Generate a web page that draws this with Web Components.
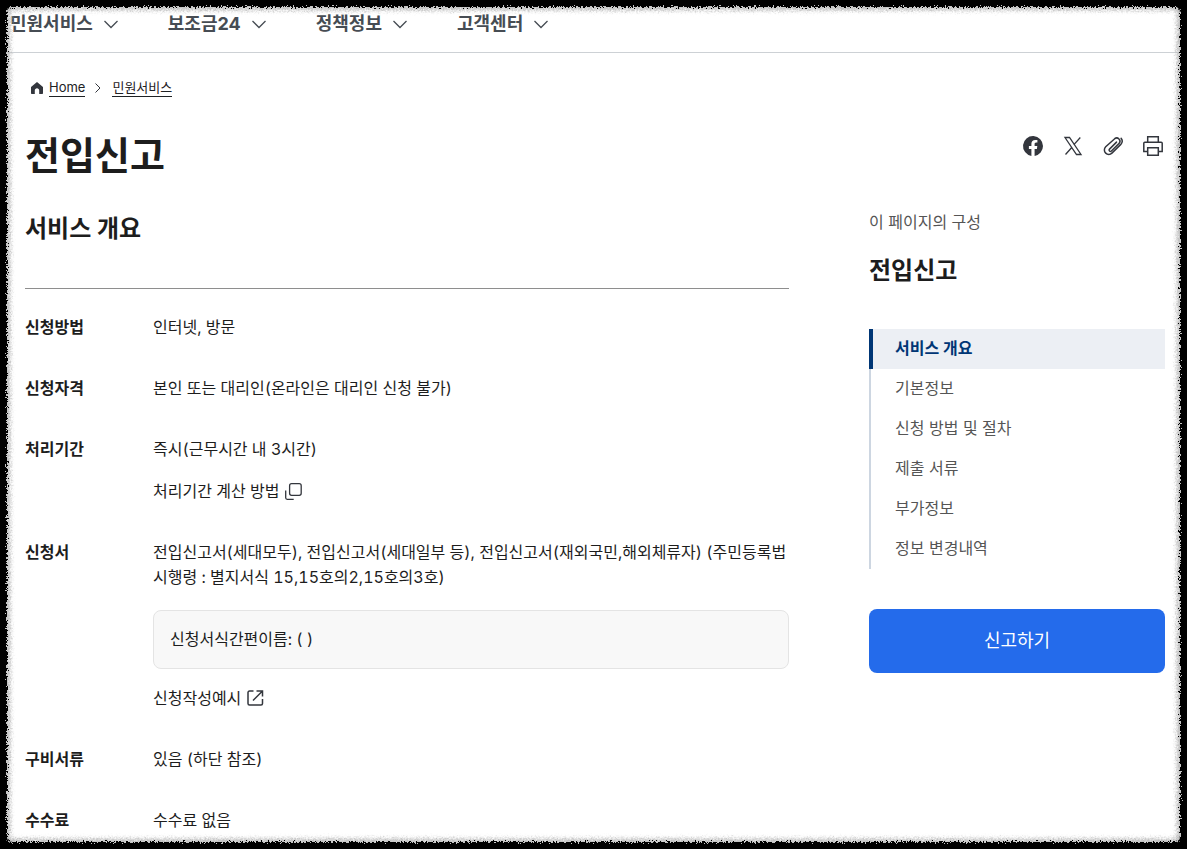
<!DOCTYPE html>
<html lang="ko">
<head>
<meta charset="utf-8">
<meta name="viewport" content="width=device-width, initial-scale=1">
<title>전입신고</title>
<style>
  html {
    background: #fff;
  }

  body {
    margin: 0;
    color: #1d1d1d;
    font-family: Inter, "Noto Sans CJK KR", sans-serif;
    font-size: 16px;
    line-height: 25px;
    height: 100vh;
    overflow: hidden;
  }
</style>
</head>
<body>
<service-page></service-page>

<script>
const icons = {
  down: '<path d="M0.500 4 7 10.500l6.500-6.500" fill="none" stroke="currentColor" stroke-width="1.3"/>',
  right: '<path d="M4.5 2.5 9 7l-4.500 4.500" fill="none" stroke="currentColor" stroke-width="1"/>',
  home: '<path d="M7 1 1 6v6.300c0 .4.3.7.7.7h3.100V9.500c0-1.200 1-2.200 2.200-2.200s2.200 1 2.200 2.200V13h3.100c.4 0 .7-.3.7-.7V6z" fill="currentColor"/>',
  facebook: '<path d="M22 12a10 10 0 1 0-11.600 9.900v-7H7.900V12h2.500V9.800c0-2.500 1.500-3.900 3.800-3.900 1.100 0 2.200.2 2.200.2v2.500h-1.200c-1.200 0-1.600.8-1.600 1.500V12h2.700l-.4 2.900h-2.300v7A10 10 0 0 0 22 12z" fill="currentColor"/>',
  x: '<path d="M4 3.500h4.500L20 20.500h-4.500zM19.300 3.500l-6.600 7.400M11 13.200l-6.500 7.300" fill="none" stroke="currentColor" stroke-width="1.3"/>',
  clip: '<path d="m15.500 8.100-7 7a1.300 1.300 0 0 0 1.900 1.900l7.800-7.800a3.200 3.200 0 0 0-4.500-4.500L4.700 12.800a4.400 4.400 0 0 0 0 6.300 4.400 4.400 0 0 0 6.200 0l8.900-8.700a4.700 4.700 0 0 0 .3-6.100" fill="none" stroke="currentColor" stroke-width="1.500" stroke-linecap="round"/>',
  print: '<g fill="none" stroke="currentColor" stroke-width="1.500"><path d="M6.700 8.300V2.800h10.600v5.500M6.700 17.500H2.800V9.300c0-.6.4-1 1-1h16.400c.6 0 1 .4 1 1v8.200h-3.900"/><path d="M6.700 13.800h10.600v7.400H6.700z"/></g>',
  layer: '<g fill="none" stroke="currentColor" stroke-width="1.300"><rect x="5.600" y="1.700" width="11.600" height="11.600" rx="2"/><path d="M1.700 8.500v7.300c0 .8.700 1.500 1.500 1.500h6.500"/></g>',
  open: '<g fill="none" stroke="currentColor" stroke-width="1.500"><path d="M7.500 2H3.500C2.700 2 2 2.700 2 3.500v11c0 .8.700 1.500 1.500 1.500h11.500c.8 0 1.500-.7 1.500-1.500V10M10.500 2h6v5.500M16.500 2 7 11.500"/></g>'
};

class UiIcon extends HTMLElement {
  connectedCallback() {
    const size = this.getAttribute('size') || 24;
    this.attachShadow({ mode: 'open' });
    this.shadowRoot.innerHTML = `
      <style>
        :host {
          display: block;
          flex: none;
        }

        svg {
          display: block;
        }
      </style>
      <svg width="${size}" height="${size}" viewBox="0 0 ${size} ${size}" aria-hidden="true">${icons[this.getAttribute('name')]}</svg>
    `;
  }
}

class SiteNav extends HTMLElement {
  connectedCallback() {
    const menus = ['민원서비스', '보조금24', '정책정보', '고객센터'];
    this.attachShadow({ mode: 'open' });
    this.shadowRoot.innerHTML = `
      <style>
        :host {
          display: block;
          border-bottom: 1px solid #cdd1d5;
        }

        nav {
          display: flex;
          gap: 50px;
          padding: 11px 10px 16px;
        }

        button {
          display: flex;
          align-items: center;
          gap: 11px;
          padding: 0;
          border: 0;
          background: none;
          color: #464c53;
          font: inherit;
          font-size: 18px;
          font-weight: 700;
          white-space: nowrap;
          cursor: pointer;
        }
      </style>
      <nav>
        ${menus.map(m => `<button type="button" aria-haspopup="true">${m}<ui-icon name="down" size="14"></ui-icon></button>`).join('')}
      </nav>
    `;
  }
}

class BreadCrumb extends HTMLElement {
  connectedCallback() {
    this.attachShadow({ mode: 'open' });
    this.shadowRoot.innerHTML = `
      <style>
        :host {
          display: block;
          font-size: 13px;
          line-height: 18px;
        }

        nav {
          display: flex;
          align-items: center;
          gap: 5px;
          padding-left: 5px;
        }

        ui-icon {
          color: #33363d;
        }

        .arrow {
          margin: 0 2px 0 1px;
        }

        a {
          color: #1e2124;
          text-decoration: none;
          border-bottom: 1px solid #1e2124;
        }
      </style>
      <nav aria-label="breadcrumb">
        <ui-icon name="home" size="14"></ui-icon>
        <a href="#">Home</a>
        <ui-icon class="arrow" name="right" size="14"></ui-icon>
        <a href="#">민원서비스</a>
      </nav>
    `;
  }
}

class ShareTools extends HTMLElement {
  connectedCallback() {
    this.attachShadow({ mode: 'open' });
    this.shadowRoot.innerHTML = `
      <style>
        :host {
          display: flex;
          gap: 16px;
        }

        button {
          padding: 0;
          border: 0;
          background: none;
          color: #33363d;
          cursor: pointer;
        }
      </style>
      <button type="button" aria-label="페이스북"><ui-icon name="facebook"></ui-icon></button>
      <button type="button" aria-label="X"><ui-icon name="x"></ui-icon></button>
      <button type="button" aria-label="링크 복사"><ui-icon name="clip"></ui-icon></button>
      <button type="button" aria-label="인쇄"><ui-icon name="print"></ui-icon></button>
    `;
  }
}

class InfoRow extends HTMLElement {
  connectedCallback() {
    this.attachShadow({ mode: 'open' });
    this.shadowRoot.innerHTML = `
      <style>
        :host {
          display: grid;
          grid-template-columns: 128px 1fr;
          font-variant-numeric: tabular-nums;
        }

        h3 {
          margin: 0;
          font-size: 16px;
          font-weight: 700;
        }

        .content {
          display: flex;
          flex-direction: column;
          align-items: flex-start;
          gap: 16px;
        }
      </style>
      <h3>${this.getAttribute('label')}</h3>
      <div class="content"><slot></slot></div>
    `;
  }
}

class IconLink extends HTMLElement {
  connectedCallback() {
    this.attachShadow({ mode: 'open' });
    this.shadowRoot.innerHTML = `
      <style>
        :host {
          display: block;
        }

        a {
          display: flex;
          align-items: center;
          gap: 5px;
          min-height: 26px;
          color: inherit;
          text-decoration: none;
        }

        ui-icon {
          color: #33363d;
        }
      </style>
      <a href="#"><slot></slot><ui-icon name="${this.getAttribute('icon')}" size="18"></ui-icon></a>
    `;
  }
}

class NoteBox extends HTMLElement {
  connectedCallback() {
    this.attachShadow({ mode: 'open' });
    this.shadowRoot.innerHTML = `
      <style>
        :host {
          display: block;
          box-sizing: border-box;
          width: 100%;
          margin-top: 4px;
          padding: 16px;
          border: 1px solid #e4e4e4;
          border-radius: 8px;
          background: #f8f8f8;
        }
      </style>
      <slot></slot>
    `;
  }
}

class PageIndex extends HTMLElement {
  connectedCallback() {
    const items = ['서비스 개요', '기본정보', '신청 방법 및 절차', '제출 서류', '부가정보', '정보 변경내역'];
    this.attachShadow({ mode: 'open' });
    this.shadowRoot.innerHTML = `
      <style>
        :host {
          display: block;
        }

        p {
          margin: 0;
          color: #555;
        }

        h2 {
          margin: 19px 0 41px;
          font-size: 24px;
          line-height: 34px;
        }

        ul {
          margin: 0 0 40px;
          padding: 0;
          list-style: none;
        }

        a {
          display: block;
          padding: 7px 0 8px 24px;
          border-left: 2px solid #cdd6e1;
          color: #555;
          text-decoration: none;
        }

        a[aria-current] {
          padding-left: 22px;
          border-left: 4px solid #003675;
          background: #eceff4;
          color: #003675;
          font-weight: 700;
        }

        button {
          width: 100%;
          height: 64px;
          padding: 0 0 2px;
          border: 0;
          border-radius: 8px;
          background: #246beb;
          color: #fff;
          font: inherit;
          font-size: 18px;
          cursor: pointer;
        }
      </style>
      <p>이 페이지의 구성</p>
      <h2>전입신고</h2>
      <ul>
        ${items.map((t, i) => `<li><a href="#"${i === 0 ? ' aria-current="true"' : ''}>${t}</a></li>`).join('')}
      </ul>
      <button type="button">신고하기</button>
    `;
  }
}

/* Torn black edge that lies over the whole window */
class RoughFrame extends HTMLElement {
  connectedCallback() {
    this.attachShadow({ mode: 'open' });
    this.shadowRoot.innerHTML = `
      <style>
        :host {
          position: fixed;
          inset: 0;
          overflow: hidden;
          pointer-events: none;
        }

        div {
          position: absolute;
          inset: -20px;
          border: 27px solid #000;
          border-radius: 32px;
          outline: 20px solid #000;
          outline-offset: -20px;
          box-shadow: inset 0 0 4px 3px #bbb;
          filter: url(#rough);
        }

        svg {
          position: absolute;
        }
      </style>
      <svg width="0" height="0" aria-hidden="true">
        <filter id="rough" x="0" y="0" width="100%" height="100%" color-interpolation-filters="sRGB">
          <feTurbulence type="fractalNoise" baseFrequency="0.6" numOctaves="3" seed="4" result="noise"/>
          <feDisplacementMap in="SourceGraphic" in2="noise" scale="7" xChannelSelector="R" yChannelSelector="G"/>
        </filter>
      </svg>
      <div></div>
    `;
  }
}

class ServicePage extends HTMLElement {
  connectedCallback() {
    this.attachShadow({ mode: 'open' });
    this.shadowRoot.innerHTML = `
      <style>
        :host {
          display: block;
        }

        main {
          padding: 25px 22px 40px 25px;
        }

        .title {
          display: flex;
          justify-content: space-between;
          align-items: flex-start;
          margin-top: 28px;
        }

        h1 {
          margin: 0;
          font-size: 38px;
          line-height: 60px;
        }

        share-tools {
          margin-top: 9px;
        }

        .columns {
          display: grid;
          grid-template-columns: 1fr 296px;
          gap: 80px;
          margin-top: 25px;
        }

        h2 {
          margin: 0;
          padding: 2px 0 42px;
          border-bottom: 1px solid #8e8e8e;
          font-size: 24px;
          line-height: 34px;
        }

        .rows {
          display: flex;
          flex-direction: column;
          gap: 36px;
          padding-top: 26px;
        }
      </style>
      <site-nav></site-nav>
      <main>
        <bread-crumb></bread-crumb>
        <div class="title">
          <h1>전입신고</h1>
          <share-tools></share-tools>
        </div>
        <div class="columns">
          <section>
            <h2>서비스 개요</h2>
            <div class="rows">
              <info-row label="신청방법"><span>인터넷, 방문</span></info-row>
              <info-row label="신청자격"><span>본인 또는 대리인(온라인은 대리인 신청 불가)</span></info-row>
              <info-row label="처리기간">
                <span>즉시(근무시간 내 3시간)</span>
                <icon-link icon="layer">처리기간 계산 방법</icon-link>
              </info-row>
              <info-row label="신청서">
                <span>전입신고서(세대모두), 전입신고서(세대일부 등), 전입신고서(재외국민,해외체류자) (주민등록법<br>시행령 : 별지서식 15,15호의2,15호의3호)</span>
                <note-box>신청서식간편이름: ( )</note-box>
                <icon-link icon="open">신청작성예시</icon-link>
              </info-row>
              <info-row label="구비서류"><span>있음 (하단 참조)</span></info-row>
              <info-row label="수수료"><span>수수료 없음</span></info-row>
            </div>
          </section>
          <page-index></page-index>
        </div>
      </main>
      <rough-frame></rough-frame>
    `;
  }
}

customElements.define('ui-icon', UiIcon);
customElements.define('site-nav', SiteNav);
customElements.define('bread-crumb', BreadCrumb);
customElements.define('share-tools', ShareTools);
customElements.define('info-row', InfoRow);
customElements.define('icon-link', IconLink);
customElements.define('note-box', NoteBox);
customElements.define('page-index', PageIndex);
customElements.define('rough-frame', RoughFrame);
customElements.define('service-page', ServicePage);
</script>
</body>
</html>
